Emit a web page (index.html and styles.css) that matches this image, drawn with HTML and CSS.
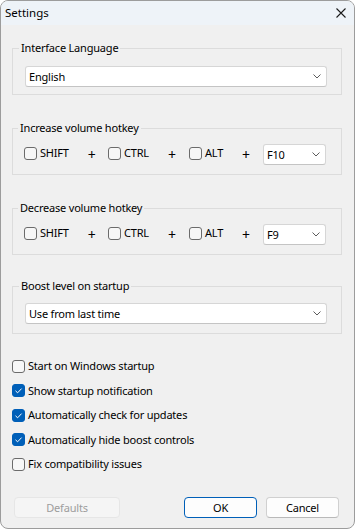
FILE: index.html
```html
<!DOCTYPE html>
<html lang="en">
<head>
  <meta charset="UTF-8" />
  <title>Settings</title>
  <link rel="stylesheet" href="styles.css">
</head>
<body>
  <div class="window">
    <div class="titlebar">
      <span class="title">Settings</span>
      <svg class="close" width="10" height="10" viewBox="0 0 10 10">
        <path d="M0.5 0.5 L9.5 9.5 M9.5 0.5 L0.5 9.5" stroke="#1b1b1b" stroke-width="1.1" fill="none"/>
      </svg>
    </div>

    <div class="content">
      <fieldset class="group group-lang">
        <legend>Interface Language</legend>
        <div class="select">
          <span>English</span>
          <svg class="chevron" width="8" height="5" viewBox="0 0 8 5"><polyline points="0.5,0.5 4,4 7.5,0.5" fill="none" stroke="#5c5c5c" stroke-width="1"/></svg>
        </div>
      </fieldset>

      <fieldset class="group group-hotkey">
        <legend>Increase volume hotkey</legend>
        <div class="hotkey-row">
          <div class="hk-cell"><label class="check"><span class="box"></span>SHIFT</label><span class="plus">+</span></div>
          <div class="hk-cell"><label class="check"><span class="box"></span>CTRL</label><span class="plus">+</span></div>
          <div class="hk-cell"><label class="check"><span class="box"></span>ALT</label><span class="plus">+</span></div>
          <div class="select select-key">
            <span>F10</span>
            <svg class="chevron" width="8" height="5" viewBox="0 0 8 5"><polyline points="0.5,0.5 4,4 7.5,0.5" fill="none" stroke="#5c5c5c" stroke-width="1"/></svg>
          </div>
        </div>
      </fieldset>

      <fieldset class="group group-hotkey">
        <legend>Decrease volume hotkey</legend>
        <div class="hotkey-row">
          <div class="hk-cell"><label class="check"><span class="box"></span>SHIFT</label><span class="plus">+</span></div>
          <div class="hk-cell"><label class="check"><span class="box"></span>CTRL</label><span class="plus">+</span></div>
          <div class="hk-cell"><label class="check"><span class="box"></span>ALT</label><span class="plus">+</span></div>
          <div class="select select-key">
            <span>F9</span>
            <svg class="chevron" width="8" height="5" viewBox="0 0 8 5"><polyline points="0.5,0.5 4,4 7.5,0.5" fill="none" stroke="#5c5c5c" stroke-width="1"/></svg>
          </div>
        </div>
      </fieldset>

      <fieldset class="group group-boost">
        <legend>Boost level on startup</legend>
        <div class="select">
          <span>Use from last time</span>
          <svg class="chevron" width="8" height="5" viewBox="0 0 8 5"><polyline points="0.5,0.5 4,4 7.5,0.5" fill="none" stroke="#5c5c5c" stroke-width="1"/></svg>
        </div>
      </fieldset>

      <div class="options">
        <label class="check"><span class="box"></span>Start on Windows startup</label>
        <label class="check"><span class="box checked"><svg width="13" height="13" viewBox="0 0 13 13"><path d="M3.5 6.8 L5.6 8.8 L9.6 4.6" fill="none" stroke="#fff" stroke-width="1"/></svg></span>Show startup notification</label>
        <label class="check"><span class="box checked"><svg width="13" height="13" viewBox="0 0 13 13"><path d="M3.5 6.8 L5.6 8.8 L9.6 4.6" fill="none" stroke="#fff" stroke-width="1"/></svg></span>Automatically check for updates</label>
        <label class="check"><span class="box checked"><svg width="13" height="13" viewBox="0 0 13 13"><path d="M3.5 6.8 L5.6 8.8 L9.6 4.6" fill="none" stroke="#fff" stroke-width="1"/></svg></span>Automatically hide boost controls</label>
        <label class="check"><span class="box"></span>Fix compatibility issues</label>
      </div>

      <div class="buttons">
        <button class="btn btn-defaults" disabled>Defaults</button>
        <span class="spacer"></span>
        <button class="btn btn-ok">OK</button>
        <button class="btn">Cancel</button>
      </div>
    </div>
  </div>
</body>
</html>
```

FILE: styles.css
```css
* {
  margin: 0;
  padding: 0;
  box-sizing: border-box;
}
body {
  margin: 0;
  font-family: "Noto Sans", "Open Sans", sans-serif;
  font-size: 11px;
  letter-spacing: -0.2px;
  color: #000;
  background: #fff;
}

.window {
  width: 355px;
  height: 529px;
  border: 1px solid #9c9c9c;
  border-radius: 8px;
  background: #f0f0f0;
  overflow: hidden;
  display: flex;
  flex-direction: column;
}

.titlebar {
  height: 24px;
  flex: none;
  background: #eef3f8;
  display: flex;
  align-items: center;
  justify-content: space-between;
  padding: 0 8px 0 4px;
}
.title {
  font-size: 11.5px;
  letter-spacing: 0;
  line-height: 16px;
}
.close {
  display: block;
}

.content {
  flex: 1;
  display: flex;
  flex-direction: column;
  padding: 15px 12px 0 11px;
}

/* group boxes */
.group {
  border: 1px solid #dcdcdc;
  min-width: 0;
  margin: 0;
}
.group legend {
  line-height: 16px;
  padding: 0 2px;
  margin-left: -6px;
}
.group-lang {
  padding: 10px 14px 7px 12px;
}
.group-hotkey {
  margin-top: 25px;
  padding: 8px 14px 9px 11px;
}
.group-boost {
  margin-top: 23px;
  padding: 9px 14px 9px 12px;
}

/* combo boxes */
.select {
  height: 21px;
  background: #fff;
  border: 1px solid #d6d6d6;
  border-bottom-color: #c4c4c4;
  border-radius: 3px;
  display: flex;
  align-items: center;
  justify-content: space-between;
  padding: 0 5px 0 3px;
  line-height: 16px;
}
.chevron {
  display: block;
}
.select-key {
  width: 63px;
}

/* hotkey rows */
.hotkey-row {
  display: grid;
  grid-template-columns: 84px 81px 74px 63px;
  align-items: center;
}
.hk-cell {
  display: flex;
  align-items: center;
}
.hk-cell .check {
  margin-bottom: 3px;
}
.plus {
  margin-left: 19px;
  font-size: 14px;
  line-height: 16px;
}

/* checkboxes */
.check {
  display: flex;
  align-items: center;
  gap: 3px;
  height: 16px;
  line-height: 16px;
  white-space: nowrap;
}
.box {
  width: 13px;
  height: 13px;
  flex: none;
  border: 1px solid #6b6b6b;
  border-radius: 3px;
  background: #f7f7f7;
}
.box.checked {
  border-color: #005fb8;
  background: #005fb8;
  position: relative;
}
.box.checked svg {
  position: absolute;
  left: -1px;
  top: -1px;
}

.options {
  margin-top: 24px;
  display: flex;
  flex-direction: column;
  gap: 8.5px;
}

/* dialog buttons */
.buttons {
  margin-top: 25px;
  display: flex;
  gap: 9px;
  padding: 0 3px 0 2px;
}
.spacer {
  flex: 1;
}
.btn {
  height: 21px;
  width: 73px;
  font-family: inherit;
  font-size: 11px;
  letter-spacing: -0.2px;
  line-height: 16px;
  color: #000;
  background: #fdfdfd;
  border: 1px solid #d0d0d0;
  border-bottom-color: #b9b9b9;
  border-radius: 4px;
}
.btn-ok {
  border: 1px solid #005fb8;
}
.btn-defaults {
  width: 106px;
  color: #9d9d9d;
  background: #f5f5f5;
  border-color: #e6e6e6;
}
```
